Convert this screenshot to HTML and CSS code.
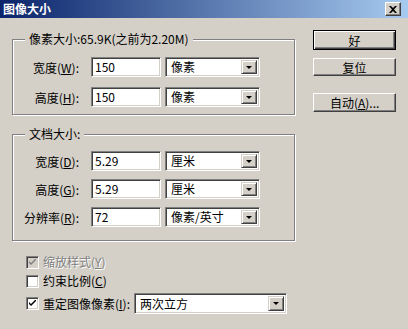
FILE: index.html
```html
<!DOCTYPE html>
<html lang="zh-CN">
<head>
  <meta charset="UTF-8" />
  <meta name="viewport" content="width=device-width, initial-scale=1.0" />
  <title>图像大小</title>
  <link rel="stylesheet" href="styles.css">
</head>
<body>
  <div class="window">
    <div class="titlebar">
      <span class="title">图像大小</span>
      <span class="close">
        <svg width="8" height="7" viewBox="0 0 8 7"><path d="M0 0h2l2 2 2-2h2L5 3.5 8 7H6L4 5 2 7H0l3-3.5z" fill="#000"/></svg>
      </span>
    </div>

    <div class="content">
      <div class="main">
        <div class="group g-pixels">
          <span class="legend">像素大小:65.9K(之前为2.20M)</span>
          <div class="row">
            <label>宽度(<u>W</u>):</label>
            <div class="field">150</div>
            <div class="select">像素<span class="drop"></span></div>
          </div>
          <div class="row">
            <label>高度(<u>H</u>):</label>
            <div class="field">150</div>
            <div class="select">像素<span class="drop"></span></div>
          </div>
        </div>

        <div class="group g-doc">
          <span class="legend">文档大小:</span>
          <div class="row">
            <label>宽度(<u>D</u>):</label>
            <div class="field">5.29</div>
            <div class="select">厘米<span class="drop"></span></div>
          </div>
          <div class="row">
            <label>高度(<u>G</u>):</label>
            <div class="field">5.29</div>
            <div class="select">厘米<span class="drop"></span></div>
          </div>
          <div class="row">
            <label>分辨率(<u>R</u>):</label>
            <div class="field">72</div>
            <div class="select">像素/英寸<span class="drop"></span></div>
          </div>
        </div>

        <div class="checks">
          <div class="check disabled">
            <span class="box"><svg width="7" height="7" viewBox="0 0 7 7"><path d="M0 2l2 2 5-5v2L2 6 0 4z" fill="#808080"/></svg></span>
            <span class="text">缩放样式(<u>Y</u>)</span>
          </div>
          <div class="check">
            <span class="box"></span>
            <span class="text">约束比例(<u>C</u>)</span>
          </div>
          <div class="check">
            <span class="box"><svg width="7" height="7" viewBox="0 0 7 7"><path d="M0 2l2 2 5-5v2L2 6 0 4z" fill="#000"/></svg></span>
            <span class="text">重定图像像素(<u>I</u>):</span>
            <div class="select wide">两次立方<span class="drop"></span></div>
          </div>
        </div>
      </div>

      <div class="buttons">
        <div class="btn default">好</div>
        <div class="btn">复位</div>
        <div class="btn auto">自动(<u>A</u>)...</div>
      </div>
    </div>
  </div>
</body>
</html>
```

FILE: styles.css
```css
body {
  margin: 0;
  background: #d4d0c8;
  font-family: "Noto Sans CJK SC", "Liberation Sans", sans-serif;
  font-size: 12px;
  color: #000;
}
.window {
  width: 408px;
  height: 329px;
  background: #d4d0c8;
  overflow: hidden;
}
.titlebar {
  height: 18px;
  display: flex;
  align-items: center;
  justify-content: space-between;
  padding: 0 7px 0 3px;
  background: linear-gradient(to right, #0a246a, #a6caf0);
}
.title {
  color: #fff;
  font-weight: bold;
  font-size: 12px;
  line-height: 14px;
}
.close {
  width: 14px;
  height: 12px;
  display: flex;
  align-items: center;
  justify-content: center;
  background: #d4d0c8;
  border: 1px solid;
  border-color: #fff #404040 #404040 #fff;
  box-shadow: inset -1px -1px 0 #808080;
}
.content {
  display: flex;
  padding: 0 12px;
  gap: 18px;
}
.main {
  width: 284px;
}
.group {
  position: relative;
  border: 1px solid #808080;
  box-shadow: 1px 1px 0 #fff, inset 1px 1px 0 #fff;
  display: flex;
  flex-direction: column;
}
.g-pixels {
  margin-top: 21px;
  padding: 17px 0 7px;
  gap: 10px;
}
.g-doc {
  margin-top: 19px;
  padding: 16px 0 13px;
  gap: 8px;
}
.legend {
  position: absolute;
  top: -9px;
  left: 12px;
  padding: 0 4px;
  background: #d4d0c8;
  line-height: 16px;
}
.row {
  display: flex;
  align-items: center;
  height: 20px;
}
.row label {
  width: 66px;
  text-align: right;
  margin-right: 12px;
}
.field, .select {
  box-sizing: border-box;
  height: 20px;
  background: #fff;
  border: 1px solid;
  border-color: #808080 #fff #fff #808080;
  box-shadow: inset 1px 1px 0 #404040, inset -1px -1px 0 #d4d0c8;
  display: flex;
  align-items: center;
  line-height: 16px;
}
.field {
  width: 70px;
  padding-left: 3px;
  margin-right: 4px;
}
.select {
  width: 95px;
  padding-left: 5px;
  position: relative;
}
.drop {
  position: absolute;
  right: 2px;
  top: 2px;
  width: 16px;
  height: 14px;
  box-sizing: border-box;
  background: #d4d0c8;
  border: 1px solid;
  border-color: #d4d0c8 #404040 #404040 #d4d0c8;
  box-shadow: inset 1px 1px 0 #fff, inset -1px -1px 0 #808080;
}
.drop::after {
  content: "";
  position: absolute;
  left: 4px;
  top: 5px;
  border-left: 3px solid transparent;
  border-right: 3px solid transparent;
  border-top: 3px solid #000;
}
.checks {
  margin-top: 14px;
  padding-left: 14px;
  display: flex;
  flex-direction: column;
  gap: 5px;
}
.check {
  display: flex;
  align-items: center;
  min-height: 13px;
}
.box {
  box-sizing: border-box;
  width: 13px;
  height: 13px;
  background: #fff;
  border: 1px solid;
  border-color: #808080 #fff #fff #808080;
  box-shadow: inset 1px 1px 0 #404040, inset -1px -1px 0 #d4d0c8;
  display: flex;
  align-items: center;
  justify-content: center;
  margin-right: 4px;
}
.check .text {
  line-height: 14px;
}
.disabled .box {
  background: #d4d0c8;
}
.disabled .text {
  color: #808080;
  text-shadow: 1px 1px 0 #fff;
}
.select.wide {
  width: 153px;
  height: 21px;
  margin-left: 4px;
}
.select.wide .drop {
  height: 15px;
}
.buttons {
  display: flex;
  flex-direction: column;
  width: 83px;
  margin-top: 12px;
}
.btn {
  box-sizing: border-box;
  height: 18px;
  display: flex;
  align-items: center;
  justify-content: center;
  border: 1px solid;
  border-color: #fff #404040 #404040 #fff;
  box-shadow: inset -1px -1px 0 #808080;
  margin-bottom: 9px;
}
.btn.default {
  height: 20px;
  border: 1px solid #000;
  box-shadow: inset 1px 1px 0 #fff, inset -1px -1px 0 #404040, inset -2px -2px 0 #808080;
  margin-bottom: 8px;
}
.btn.auto {
  margin-top: 8px;
  height: 19px;
}
```
